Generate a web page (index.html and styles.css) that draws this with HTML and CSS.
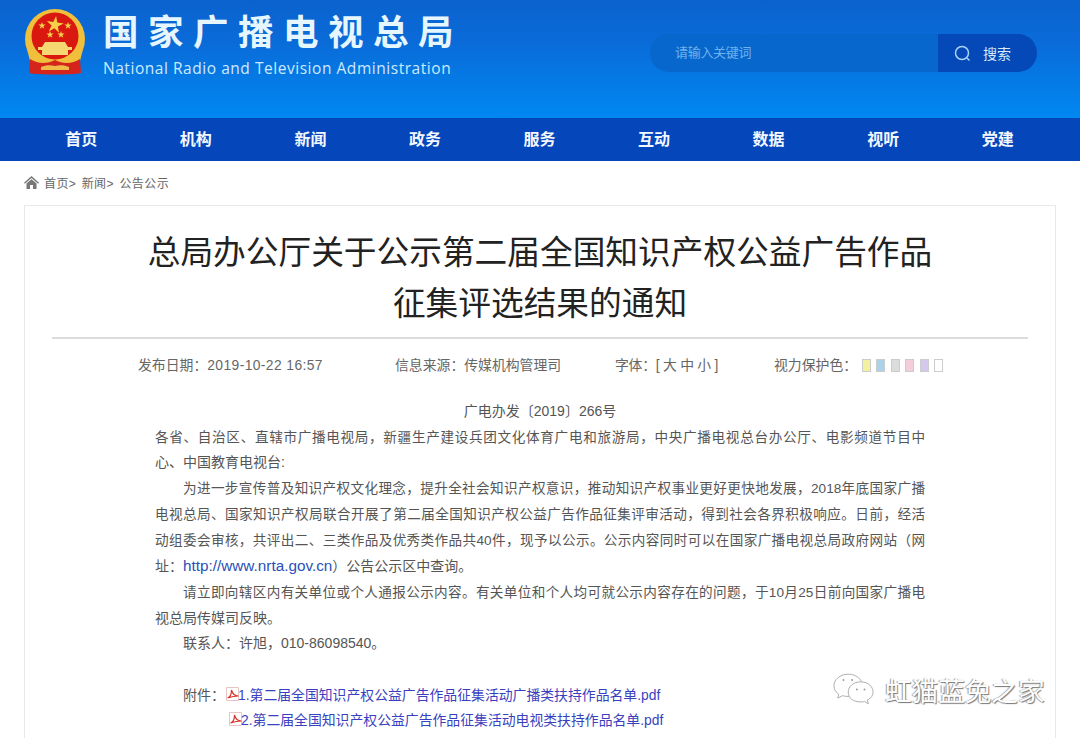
FILE: index.html
```html
<!DOCTYPE html>
<html lang="zh-CN">
<head>
    <meta charset="UTF-8">
    <meta name="viewport" content="width=device-width, initial-scale=1.0">
    <title>国家广播电视总局</title>
    <link rel="stylesheet" href="styles.css">
</head>
<body>
    <!-- 顶部 -->
    <header class="top">
        <div class="brand">
            <svg class="emblem" width="62" height="66" viewBox="0 0 62 66">
                <circle cx="31" cy="30" r="30" fill="#f0bf3c"/>
                <circle cx="31" cy="27" r="23.500" fill="#d9190f"/>
                <path d="M31 7l2 6.200h6.500l-5.300 3.800 2 6.200-5.200-3.800-5.200 3.800 2-6.200-5.300-3.800h6.500z" fill="#f7d04a" transform="rotate(8 31 15)"/>
                <path d="M18 13l.9 2.600h2.700l-2.200 1.600.9 2.600-2.300-1.600-2.300 1.600.9-2.600-2.200-1.600h2.700zM44 13l.9 2.600h2.700l-2.200 1.600.9 2.600-2.300-1.600-2.300 1.600.9-2.600-2.200-1.600h2.700zM26 22l.9 2.600h2.700l-2.200 1.600.9 2.600-2.300-1.600-2.300 1.600.9-2.600-2.200-1.600h2.700zM37 22l.9 2.600h2.700l-2.200 1.600.9 2.600-2.300-1.600-2.300 1.600.9-2.600-2.200-1.600h2.700z" fill="#f7d04a"/>
                <path d="M21 33h20l3 5H18zM14 38h34v3H14zM18 41h26v5H18z" fill="#f6d873"/>
                <path d="M3 40c4 9 15 13 28 13s24-4 28-13l-4 16H7z" fill="#f0bf3c"/>
                <path d="M6 50c8 5 17 5 25 1 8 4 17 4 25-1l1 14c-8 2-44 2-52 0z" fill="#d5241c"/>
                <path d="M17 58c5-2 9-2 14-1 5-1 9-1 14 1v3H17z" fill="#eebb4a"/>
            </svg>
            <div class="brand-text">
                <div class="brand-cn">国家广播电视总局</div>
                <div class="brand-en">National Radio and Television Administration</div>
            </div>
        </div>
        <div class="search">
            <div class="search-input">请输入关键词</div>
            <div class="search-btn">
                <svg width="19" height="19" viewBox="0 0 19 19" fill="none" stroke="#a9d2f5" stroke-width="1.500">
                    <circle cx="9" cy="9" r="6.500"/>
                    <path d="M14 14l2.500 2.500"/>
                </svg>
                <span>搜索</span>
            </div>
        </div>
    </header>

    <!-- 导航 -->
    <nav class="nav">
        <a>首页</a>
        <a>机构</a>
        <a>新闻</a>
        <a>政务</a>
        <a>服务</a>
        <a>互动</a>
        <a>数据</a>
        <a>视听</a>
        <a>党建</a>
    </nav>

    <!-- 面包屑 -->
    <div class="crumbs">
        <svg width="15" height="13" viewBox="0 0 15 13">
            <path d="M7.500 0L15 6.700l-.9 1L7.500 2 .9 7.700l-.9-1zM2.500 7.500l5-4.300 5 4.300V13H9V9H6v4H2.500z" fill="#777"/>
        </svg>
        <span>首页&gt;</span>
        <span>新闻&gt;</span>
        <span>公告公示</span>
    </div>

    <main class="card">
        <h1 class="title">总局办公厅关于公示第二届全国知识产权公益广告作品<br>征集评选结果的通知</h1>

        <div class="meta">
            <span class="meta-date">发布日期：<em>2019-10-22 16:57</em></span>
            <span class="meta-source">信息来源：传媒机构管理司</span>
            <span class="meta-size">字体：[ 大 中 小 ]</span>
            <span class="meta-color">视力保护色：<i class="swatch c1"></i><i class="swatch c2"></i><i class="swatch c3"></i><i class="swatch c4"></i><i class="swatch c5"></i><i class="swatch c6"></i></span>
        </div>

        <div class="article">
            <p class="doc-no">广电办发〔2019〕266号</p>
            <p>
                <span class="line">各省、自治区、直辖市广播电视局，新疆生产建设兵团文化体育广电和旅游局，中央广播电视总台办公厅、电影频道节目中</span>
                心、中国教育电视台:
            </p>
            <p>
                <span class="line first">为进一步宣传普及知识产权文化理念，提升全社会知识产权意识，推动知识产权事业更好更快地发展，2018年底国家广播</span>
                <span class="line">电视总局、国家知识产权局联合开展了第二届全国知识产权公益广告作品征集评审活动，得到社会各界积极响应。日前，经活</span>
                <span class="line">动组委会审核，共评出二、三类作品及优秀类作品共40件，现予以公示。公示内容同时可以在国家广播电视总局政府网站（网</span>
                址：<a class="link">http://www.nrta.gov.cn</a>）公告公示区中查询。
            </p>
            <p>
                <span class="line first">请立即向辖区内有关单位或个人通报公示内容。有关单位和个人均可就公示内容存在的问题，于10月25日前向国家广播电</span>
                视总局传媒司反映。
            </p>
            <p class="indent">联系人：许旭，010-86098540。</p>
            <p class="blank">&nbsp;</p>
            <p class="attach">
                <span class="attach-label">附件：</span><svg class="pdf" width="13" height="14" viewBox="0 0 13 14"><path d="M.5.5h12v13H.5z" fill="#fff" stroke="#e8c4c4"/><path d="M1.500 11c3-1 4-4 4-8 1 4 3 6 7 6-4 0-8 1-11 2z" fill="none" stroke="#d8342b" stroke-width="1.200"/></svg><a class="file">1.第二届全国知识产权公益广告作品征集活动广播类扶持作品名单.pdf</a>
            </p>
            <p class="attach attach-2">
                <svg class="pdf" width="13" height="14" viewBox="0 0 13 14"><path d="M.5.5h12v13H.5z" fill="#fff" stroke="#e8c4c4"/><path d="M1.500 11c3-1 4-4 4-8 1 4 3 6 7 6-4 0-8 1-11 2z" fill="none" stroke="#d8342b" stroke-width="1.200"/></svg><a class="file">2.第二届全国知识产权公益广告作品征集活动电视类扶持作品名单.pdf</a>
            </p>
        </div>
    </main>

    <!-- 水印 -->
    <div class="watermark">
        <svg width="42" height="33" viewBox="0 0 44 34" fill="#fff" stroke="#aaa" stroke-width="1">
            <path d="M16 1C7 1 1 7 1 13c0 4 2 7 5 9l-1 4 5-2.500c2 .5 4 .8 6 .8C25 24 31 19 31 13S25 1 16 1z"/>
            <path d="M29 9c-8 0-13 5-13 11s5 10 13 10c2 0 3 0 4-.5l4 2.500-1-4c4-2 6-5 6-8 0-6-5-11-13-11z"/>
            <circle cx="25" cy="17" r="1" fill="#999" stroke="none"/>
            <circle cx="33" cy="17" r="1" fill="#999" stroke="none"/>
            <circle cx="11" cy="7" r="1" fill="#999" stroke="none"/>
            <circle cx="20" cy="7" r="1" fill="#999" stroke="none"/>
        </svg>
        <span>虹猫蓝兔之家</span>
    </div>
</body>
</html>
```

FILE: styles.css
```css
/* 基本 */
* {
    margin: 0;
    padding: 0;
    box-sizing: border-box;
}

html, body {
    height: 738px;
    overflow: hidden;
}

body {
    position: relative;
    font-family: "Liberation Sans", "Noto Sans CJK SC", sans-serif;
    color: #555;
    background: #fff;
}

/* 顶部 */
.top {
    height: 118px;
    padding: 9px 43px 0 24px;
    display: flex;
    justify-content: space-between;
    background: linear-gradient(180deg, #0a62ce 0%, #0a6bd8 35%, #0088f2 100%);
}

.brand {
    display: flex;
    gap: 17px;
}

.brand-cn {
    margin-top: 1px;
    font-size: 35.500px;
    line-height: 46px;
    font-weight: 700;
    letter-spacing: 9.500px;
    color: #e6f6ff;
    white-space: nowrap;
}

.brand-en {
    margin-top: 2px;
    font-family: "Open Sans", "Liberation Sans", sans-serif;
    font-size: 15.500px;
    line-height: 20px;
    letter-spacing: .54px;
    color: #cdeaff;
    white-space: nowrap;
}

.search {
    margin-top: 25px;
    width: 387px;
    height: 38px;
    display: flex;
    border-radius: 19px;
    overflow: hidden;
}

.search-input {
    flex: 1;
    padding-left: 25px;
    font-size: 13px;
    line-height: 38px;
    letter-spacing: -.3px;
    color: #6db4ee;
    background: #0867cc;
}

.search-btn {
    width: 99px;
    padding-left: 15px;
    display: flex;
    align-items: center;
    gap: 11px;
    font-size: 14px;
    color: #d5ebfb;
    background: #0548b8;
}

/* 导航 */
.nav {
    height: 43px;
    padding: 0 25px 0 24px;
    display: grid;
    grid-template-columns: repeat(9, 1fr);
    background: #0646bb;
}

.nav a {
    font-size: 16px;
    font-weight: 700;
    line-height: 43px;
    text-align: center;
    color: #f2f8ff;
}

/* 面包屑 */
.crumbs {
    height: 44px;
    padding: 0 0 2px 24px;
    display: flex;
    align-items: center;
    font-size: 12px;
    letter-spacing: .4px;
    color: #666;
}

.crumbs svg {
    margin-right: 5px;
}

.crumbs span {
    margin-right: 5.500px;
}

/* 内容 */
.card {
    margin: 0 24px;
    height: 533px;
    padding: 18px 27px 0;
    border: 1px solid #e8e8e8;
    border-bottom: none;
    overflow: hidden;
}

.title {
    padding-bottom: 11px;
    border-bottom: 2px solid #dcdcdc;
    font-family: "Noto Sans CJK SC", sans-serif;
    font-size: 32.700px;
    font-weight: 400;
    line-height: 51px;
    text-align: center;
    color: #222;
}

.meta {
    margin-top: 14px;
    position: relative;
    height: 24px;
    font-size: 13.850px;
    line-height: 24px;
    color: #666;
    white-space: nowrap;
}

/* 四项之间的距离不等,按原图放 */
.meta > span {
    position: absolute;
    top: 0;
}

.meta em {
    font-style: normal;
    letter-spacing: .4px;
}

.meta-date { left: 86px; }
.meta-source { left: 343px; }
.meta-size { left: 563px; letter-spacing: -.25px; }
.meta-color { left: 722px; }

.swatch {
    display: inline-block;
    width: 9px;
    height: 13px;
    margin-right: 5.400px;
    vertical-align: -2px;
    border: 1px solid #ccc;
}

.c1 {
    margin-left: 5px;
    background: #f3f0a0;
}
.c2 { background: #a8d3ea; }
.c3 { background: #dcdcdc; }
.c4 { background: #f3ced8; }
.c5 { background: #d4c8ec; }
.c6 { background: #fff; }

.article {
    margin: 22px 0 0 103px;
    width: 770px;
    font-size: 14px;
    line-height: 25.700px;
    color: #555;
}

.doc-no {
    text-align: center;
}

/* 原文两端对齐 */
.line {
    display: block;
    font-size: 13.600px;
    text-align: justify;
    text-align-last: justify;
}

.first {
    padding-left: 28px;
}

.indent {
    padding-left: 28px;
}

.link {
    font-size: 15.300px;
    color: #2a50b8;
}

.attach {
    position: relative;
    padding-left: 28px;
    white-space: nowrap;
}

.attach-2 {
    padding-left: 74px;
}

.attach-label {
    margin-right: 1px;
}

.pdf {
    margin-right: -1px;
    vertical-align: -1px;
}

.file {
    font-size: 13.850px;
    color: #3a3fc0;
}

/* 水印 */
.watermark {
    position: absolute;
    left: 833px;
    top: 670px;
    display: flex;
    align-items: center;
    gap: 10px;
    font-size: 26.600px;
    color: #fff;
    text-shadow: 1px 1px 1px #777, -1px 0 1px #999;
}
```
